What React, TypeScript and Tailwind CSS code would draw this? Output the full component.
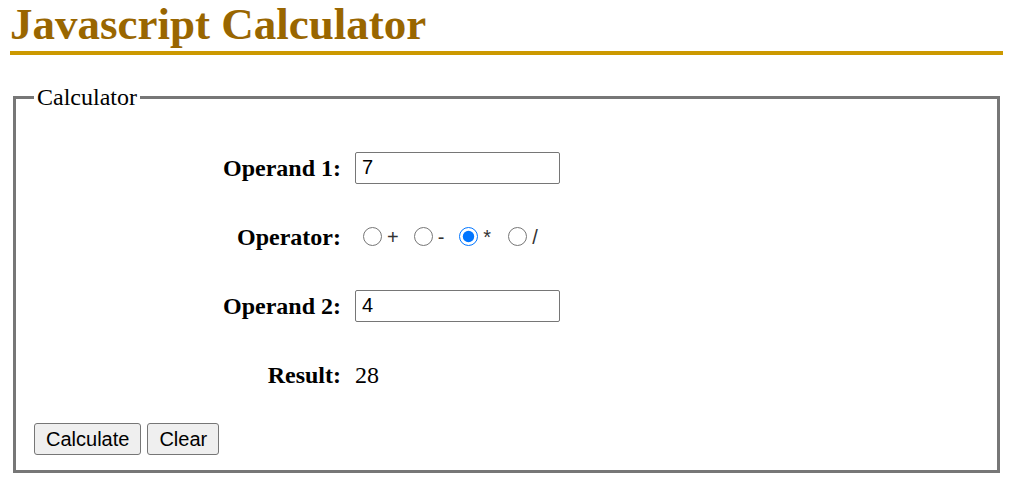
import React, { useState } from 'react';

const serif = "font-['Liberation_Serif','Times_New_Roman',serif]";
const sans = "font-['Liberation_Sans',Arial,sans-serif]";

export default function App() {
  const [a, setA] = useState('7');
  const [b, setB] = useState('4');
  const [op, setOp] = useState('*');
  const [result, setResult] = useState('28');

  const calculate = () => {
    const x = parseFloat(a);
    const y = parseFloat(b);
    let r = 0;
    if (op === '+') r = x + y;
    else if (op === '-') r = x - y;
    else if (op === '*') r = x * y;
    else r = x / y;
    setResult(String(r));
  };

  const clear = () => {
    setA('');
    setB('');
    setResult('');
  };

  const ops = [
    { v: '+', ml: 'ml-[8px]' },
    { v: '-', ml: 'ml-[15px]' },
    { v: '*', ml: 'ml-[15px]' },
    { v: '/', ml: 'ml-[17px]' },
  ];

  return (
    <div className={`${serif} bg-white text-black min-h-[487px] w-[1009px] pt-[2px]`}>
      {/* Heading */}
      <h1 className="ml-[10px] mr-[6px] text-[45px] leading-[45px] font-bold text-[#996600] pb-[4px] border-b-4 border-[#cc9900]">
        Javascript Calculator
      </h1>

      {/* Calculator box */}
      <fieldset className="mt-[24px] ml-[13px] mr-[9px] border-[3px] border-[#777777] pt-[8px] px-[18px] pb-[15px]">
        <legend className="px-[3px] text-[24px]">Calculator</legend>

        <div className="mt-[10px] grid grid-cols-[307px_1fr] gap-x-[14px] text-[24px]">
          <div className="h-[69px] flex items-center justify-end font-bold">Operand 1:</div>
          <div className="h-[69px] flex items-center">
            <input
              type="text"
              value={a}
              onChange={(e) => setA(e.target.value)}
              className={`${sans} w-[205px] h-[32px] border border-[#767676] rounded-[2px] px-[6px] text-[20px] text-black outline-none`}
            />
          </div>

          <div className="h-[69px] flex items-center justify-end font-bold">Operator:</div>
          <div className={`${sans} h-[69px] flex items-center text-[20px] text-[#333]`}>
            {ops.map((o) => (
              <label key={o.v} className={`flex items-center ${o.ml}`}>
                <input
                  type="radio"
                  name="op"
                  checked={op === o.v}
                  onChange={() => setOp(o.v)}
                  className="w-[19px] h-[19px] m-0 mr-[5px] accent-[#0075ff]"
                />
                <span>{o.v}</span>
              </label>
            ))}
          </div>

          <div className="h-[69px] flex items-center justify-end font-bold">Operand 2:</div>
          <div className="h-[69px] flex items-center">
            <input
              type="text"
              value={b}
              onChange={(e) => setB(e.target.value)}
              className={`${sans} w-[205px] h-[32px] border border-[#767676] rounded-[2px] px-[6px] text-[20px] text-black outline-none`}
            />
          </div>

          <div className="h-[69px] flex items-center justify-end font-bold">Result:</div>
          <div className="h-[69px] flex items-center">{result}</div>
        </div>

        <div className={`${sans} mt-[14px] flex gap-[6px] text-[20px]`}>
          <button
            onClick={calculate}
            className="h-[32px] px-[11px] bg-[#efefef] border border-[#767676] rounded-[3px] text-black"
          >
            Calculate
          </button>
          <button
            onClick={clear}
            className="h-[32px] px-[11px] bg-[#efefef] border border-[#767676] rounded-[3px] text-black"
          >
            Clear
          </button>
        </div>
      </fieldset>
    </div>
  );
}
